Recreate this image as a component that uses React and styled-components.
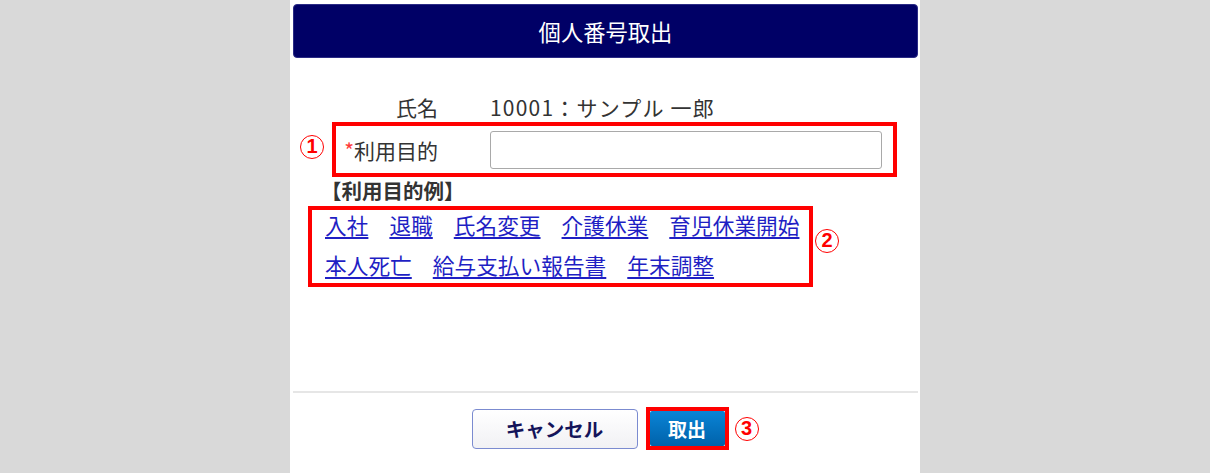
import styled, { createGlobalStyle } from 'styled-components'

const GlobalStyle = createGlobalStyle`
  body {
    margin: 0;
    background: #d9d9d9;
    font-family: "Noto Sans CJK JP", "Noto Sans", sans-serif;
    color: #333;
  }
`

const examples = [
  ['入社', '退職', '氏名変更', '介護休業', '育児休業開始'],
  ['本人死亡', '給与支払い報告書', '年末調整']
]

export default function App() {
  return (
    <>
      <GlobalStyle />
      <Page>
        <Panel>
          <Header>個人番号取出</Header>
          <Body>
            <Row>
              <Label>氏名</Label>
              <Value>10001：サンプル 一郎</Value>
            </Row>
            <FormBox>
              <Marker $left="-36px" $top="9px">1</Marker>
              <Label>
                <Required>*</Required>利用目的
              </Label>
              <Input type="text" />
            </FormBox>
            <ExampleTitle>【利用目的例】</ExampleTitle>
            <LinkBox>
              <Marker $left="calc(100% + 6px)" $top="19px">2</Marker>
              {examples.map((row, i) => (
                <LinkRow key={i}>
                  {row.map((label) => (
                    <ExampleLink href="#" key={label}>{label}</ExampleLink>
                  ))}
                </LinkRow>
              ))}
            </LinkBox>
          </Body>
          <Footer>
            <CancelButton>キャンセル</CancelButton>
            <SubmitBox>
              <Marker $left="calc(100% + 10px)" $top="6px">3</Marker>
              <SubmitButton>取出</SubmitButton>
            </SubmitBox>
          </Footer>
        </Panel>
      </Page>
    </>
  )
}

const Page = styled.div`
  display: flex;
  justify-content: center;
  min-height: 473px;
`

const Panel = styled.div`
  width: 630px;
  min-height: 473px;
  box-sizing: border-box;
  background: #fff;
  padding: 4px 2px 0 3px;
`

const Header = styled.div`
  height: 54px;
  box-sizing: border-box;
  background: #000066;
  border: 1px solid #2b2b85;
  border-radius: 4px;
  color: #fff;
  font-size: 22.3px;
  display: flex;
  align-items: center;
  justify-content: center;
`

const Body = styled.div`
  height: 333px;
  box-sizing: border-box;
  padding: 34px 0 0 15px;
  display: flex;
  flex-direction: column;
  align-items: flex-start;
`

const Row = styled.div`
  display: flex;
  align-items: center;
  height: 30px;
  margin-left: 24px;
  border-left: 4px solid transparent;
`

const Label = styled.div`
  width: 102px;
  text-align: right;
  margin-right: 52px;
  font-size: 21px;
  line-height: 30px;
  color: #333;
`

const Value = styled.div`
  font-size: 21px;
  line-height: 30px;
  letter-spacing: 1.2px;
  color: #333;
`

const Required = styled.span`
  color: #ff3b3b;
`

const FormBox = styled.div`
  position: relative;
  display: flex;
  align-items: center;
  margin-left: 24px;
  width: 565px;
  box-sizing: border-box;
  border: 4px solid #ff0000;
  padding: 5px 11px 4px 0;
`

const Input = styled.input`
  flex: 1;
  height: 38px;
  box-sizing: border-box;
  border: 1px solid #a9a9a9;
  border-radius: 3px;
  background: #fff;
  margin: 0;
  padding: 0 8px;
  font-size: 18px;
  outline: none;
`

const ExampleTitle = styled.div`
  margin-left: 13px;
  font-size: 20.5px;
  font-weight: 700;
  line-height: 26px;
  margin-bottom: 3px;
  color: #333;
`

const LinkBox = styled.div`
  position: relative;
  width: 505px;
  box-sizing: border-box;
  border: 4px solid #ff0000;
  padding: 0 8px 3px 13px;
  display: flex;
  flex-direction: column;
  gap: 10px;
`

const LinkRow = styled.div`
  display: flex;
  gap: 21px;
  height: 30px;
  align-items: center;
`

const ExampleLink = styled.a`
  color: #1f1fc4;
  font-size: 21.7px;
  line-height: 30px;
  text-decoration: underline;
  text-underline-offset: 3px;
  white-space: nowrap;
`

const Marker = styled.span`
  position: absolute;
  left: ${(p) => p.$left};
  top: ${(p) => p.$top};
  width: 24px;
  height: 24px;
  box-sizing: border-box;
  border: 1.5px solid #ff0000;
  border-radius: 50%;
  color: #ff0000;
  font-family: "Liberation Sans", "Noto Sans", sans-serif;
  font-weight: 700;
  font-size: 20px;
  line-height: 21px;
  text-align: center;
`

const Footer = styled.div`
  border-top: 2px solid #e6e6e6;
  display: flex;
  justify-content: center;
  align-items: center;
  gap: 8px;
  padding: 14px 11px 0 0;
`

const CancelButton = styled.button`
  width: 166px;
  height: 40px;
  box-sizing: border-box;
  border: 1.5px solid #7b8bd0;
  border-radius: 4px;
  background: linear-gradient(#ffffff, #f1f1f4);
  color: #14145a;
  font-family: "Noto Sans CJK JP", sans-serif;
  font-weight: 700;
  font-size: 19.5px;
  cursor: pointer;
`

const SubmitBox = styled.div`
  position: relative;
  border: 4px solid #ff0000;
  display: flex;
`

const SubmitButton = styled.button`
  width: 75px;
  height: 35px;
  border: none;
  border-radius: 2px;
  background: linear-gradient(#0a84d6, #0062aa);
  color: #fff;
  font-family: "Noto Sans CJK JP", sans-serif;
  font-weight: 700;
  font-size: 19px;
  cursor: pointer;
`
